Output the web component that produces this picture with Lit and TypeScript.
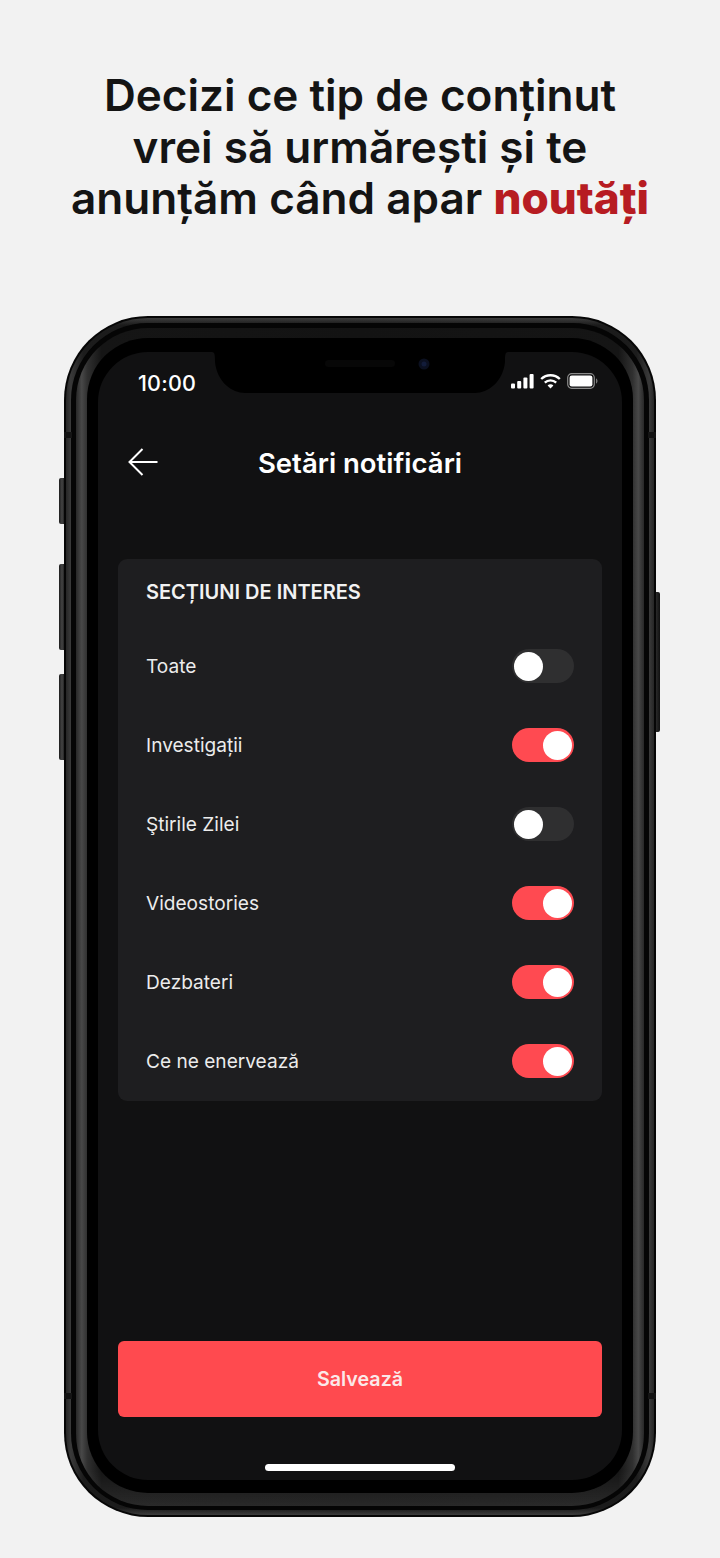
import { LitElement, html, css } from "lit";
import { customElement } from "lit/decorators.js";

const rows: [string, boolean][] = [
  ["Toate", false],
  ["Investigații", true],
  ["Ştirile Zilei", false],
  ["Videostories", true],
  ["Dezbateri", true],
  ["Ce ne enervează", true],
];

@customElement("app-root")
export class AppRoot extends LitElement {
  static styles = css`
    :host { display: block; width: 720px; height: 1558px; background: #f2f2f2; font-family: Inter, "Liberation Sans", sans-serif; overflow: hidden; }
    .page { display: flex; flex-direction: column; align-items: center; height: 1558px; padding-top: 70px; box-sizing: border-box; }
    h1 { margin: 0; width: 640px; text-align: center; font-size: 44.1px; line-height: 51.5px; font-weight: 600; color: #141414; }
    h1 em { font-style: normal; font-weight: 800; color: #b71c22; }
    .phone { position: relative; margin-top: 91px; width: 592px; height: 1201px; flex: none; }
    .btn { position: absolute; background: linear-gradient(90deg, #1c1c1c, #444 60%, #262626); border-radius: 2px 0 0 2px; left: -5px; width: 5px; }
    .b1 { top: 162px; height: 46px; }
    .b2 { top: 248px; height: 86px; }
    .b3 { top: 358px; height: 86px; }
    .b4 { left: 592px; top: 276px; height: 140px; border-radius: 0 2px 2px 0; width: 4px; background: linear-gradient(90deg, #2a2a2a, #111); }
    .band { position: absolute; background: #141414; height: 6px; width: 8px; }
    .bl1 { left: 0; top: 116px; }
    .bl2 { left: 0; top: 1077px; }
    .br1 { right: 0; top: 116px; }
    .br2 { right: 0; top: 1077px; }
    .l0, .l1, .l2, .l3, .l4 { box-sizing: border-box; height: 100%; }
    .l0 { background: #060606; border-radius: 84px; padding: 2px; }
    .l1 { background:
        linear-gradient(180deg, #3d3d3d 0, transparent .6%, transparent 99.4%, #3d3d3d 100%),
        linear-gradient(90deg, #262626 0, #3a3a3a .8%, #1c1c1c 3%, #141414 50%, #1c1c1c 97%, #3a3a3a 99.2%, #262626 100%);
      border-radius: 82px; padding: 5px; }
    .l2 { background: #050505; border-radius: 77px; padding: 5px 5px 4px; }
    .l3 { background:
        linear-gradient(180deg, transparent 97%, rgba(255,255,255,.09) 100%),
        linear-gradient(90deg, #282828 0, #484848 1%, #303030 2%, #151515 4.5%, #131313 50%, #151515 95.5%, #303030 98%, #484848 99%, #282828 100%);
      border-radius: 72px; padding: 10px 11px 13px; }
    .l4 { background: #000; border-radius: 61px; padding: 14px 11px 13px; }
    .screen { position: relative; box-sizing: border-box; height: 100%; background: #111112; border-radius: 50px; overflow: hidden; display: flex; flex-direction: column; align-items: stretch; padding: 0 20px 9px; }
    .notch { position: absolute; left: 114px; top: 0; width: 296px; height: 41px; }
    .status { display: flex; justify-content: space-between; align-items: center; height: 22px; margin-top: 20px; padding: 0 4px 0 20px; position: relative; }
    .time { font-size: 21.5px; font-weight: 500; color: #fff; letter-spacing: .2px; line-height: 22px; }
    .icons { display: flex; align-items: center; gap: 6px; margin-bottom: 3px; }
    .header { position: relative; display: flex; align-items: center; justify-content: center; height: 40px; margin-top: 49px; }
    .back { position: absolute; left: 10px; top: 5px; }
    .title { font-size: 27.5px; font-weight: 600; color: #fff; line-height: 40px; }
    .card { margin-top: 76px; background: #1e1e20; border-radius: 9px; padding: 21px 28px 0; height: 542px; box-sizing: border-box; }
    .card h2 { margin: 0; font-size: 20px; line-height: 24px; font-weight: 600; color: #f2f2f2; }
    .rows { display: flex; flex-direction: column; margin-top: 23px; }
    .row { display: flex; align-items: center; justify-content: space-between; height: 79px; font-size: 19.1px; color: #ececec; }
    .tog { width: 62px; height: 34px; border-radius: 17px; background: #2f2f30; position: relative; display: block; }
    .tog.on { background: #ff4a51; }
    .tog::after { content: ""; position: absolute; top: 2.5px; left: 2px; width: 29px; height: 29px; border-radius: 50%; background: #fff; }
    .tog.on::after { left: 31px; }
    .save { margin-top: auto; height: 76px; border-radius: 6px; background: #ff4a4f; color: #fbe9e9; font-size: 19.7px; font-weight: 600; display: flex; align-items: center; justify-content: center; }
    .home { align-self: center; width: 190px; height: 7px; border-radius: 4px; background: #fff; margin-top: 47px; }
  `;

  render() {
    return html`
      <div class="page">
        <h1>Decizi ce tip de conținut<br />vrei să urmărești și te<br />anunțăm când apar <em>noutăți</em></h1>
        <div class="phone">
          <i class="btn b1"></i><i class="btn b2"></i><i class="btn b3"></i><i class="btn b4"></i>
          <div class="l0"><div class="l1"><div class="l2"><div class="l3"><div class="l4">
            <div class="screen">
              <svg class="notch" viewBox="0 0 296 41">
                <path d="M0 0C3 0 3 4 3 10C5 30 20 41 33 41H263C276 41 291 30 293 10C293 4 293 0 296 0Z" fill="#000" />
                <rect x="113" y="8" width="70" height="7" rx="3.500" fill="#070707" />
                <circle cx="212" cy="12" r="5.500" fill="#0b1020" />
                <circle cx="212" cy="12" r="2.500" fill="#121c3a" />
              </svg>
              <div class="status">
                <span class="time">10:00</span>
                <span class="icons">
                  <svg width="23" height="15" viewBox="0 0 23 15" fill="#fff">
                    <rect x="0" y="9.500" width="4" height="5" rx="1" />
                    <rect x="6.200" y="7" width="4" height="7.500" rx="1" />
                    <rect x="12.400" y="3.500" width="4" height="11" rx="1" />
                    <rect x="18.600" y="0" width="4" height="14.500" rx="1" />
                  </svg>
                  <svg width="21" height="15" viewBox="0 0 21 15" fill="none" stroke="#fff" stroke-width="2.400">
                    <path d="M1.200 5A13.500 13.500 0 0 1 19.800 5" />
                    <path d="M4.800 8.600A8.400 8.400 0 0 1 16.200 8.600" />
                    <path d="M10.500 14.600L7.600 11.500A4 4 0 0 1 13.400 11.500Z" fill="#fff" stroke="none" />
                  </svg>
                  <svg width="31" height="16" viewBox="0 0 31 16" fill="none">
                    <rect x=".7" y=".7" width="26.600" height="14.600" rx="4" stroke="#8a8a8a" stroke-width="1.200" />
                    <rect x="2.600" y="2.600" width="22.800" height="10.800" rx="2.200" fill="#fff" />
                    <path d="M29 5.500C30 5.800 30.500 6.800 30.500 8C30.500 9.200 30 10.200 29 10.500Z" fill="#777" />
                  </svg>
                </span>
              </div>
              <div class="header">
                <svg class="back" width="30" height="28" viewBox="0 0 30 28" fill="none" stroke="#fff" stroke-width="2">
                  <path d="M29.500 14H1.500M14.500 1L1.500 14L14.500 27" />
                </svg>
                <span class="title">Setări notificări</span>
              </div>
              <section class="card">
                <h2>SECȚIUNI DE INTERES</h2>
                <div class="rows">
                  ${rows.map(([label, on]) => html`
                    <div class="row"><span>${label}</span><span class="tog ${on ? "on" : ""}"></span></div>
                  `)}
                </div>
              </section>
              <div class="save">Salvează</div>
              <div class="home"></div>
            </div>
          </div></div></div></div></div>
          <i class="band bl1"></i><i class="band bl2"></i><i class="band br1"></i><i class="band br2"></i>
        </div>
      </div>
    `;
  }
}
